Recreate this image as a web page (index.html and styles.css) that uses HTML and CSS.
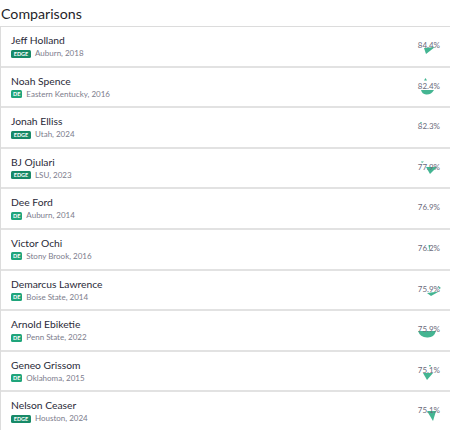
FILE: index.html
```html
<!DOCTYPE html>
<html>
<head>
<meta charset="utf-8">
<link rel="stylesheet" href="styles.css">
</head>
<body>
<h2 class="title">Comparisons</h2>
<div class="list">
  <div class="row">
    <div class="info"><div class="name">Jeff Holland</div><div class="meta"><span class="badge edge">EDGE</span><span class="school">Auburn, 2018</span></div></div>
    <div class="pct">84.4%</div>
    <svg class="radar" viewBox="0 0 40 40"><polygon points="14,21 25,20 16,27"/></svg>
  </div>
  <div class="row">
    <div class="info"><div class="name">Noah Spence</div><div class="meta"><span class="badge de">DE</span><span class="school">Eastern Kentucky, 2016</span></div></div>
    <div class="pct">82.4%</div>
    <svg class="radar" viewBox="0 0 40 40"><polygon points="14,12.5 17,12.5 15.5,10"/><path d="M11 22 L24 22 Q21 27 16 26.5 Q12 26 11 22 Z"/></svg>
  </div>
  <div class="row">
    <div class="info"><div class="name">Jonah Elliss</div><div class="meta"><span class="badge edge">EDGE</span><span class="school">Utah, 2024</span></div></div>
    <div class="pct">82.3%</div>
    <svg class="radar" viewBox="0 0 40 40"><polygon points="10,14 12,14 11,15.5"/></svg>
  </div>
  <div class="row">
    <div class="info"><div class="name">BJ Ojulari</div><div class="meta"><span class="badge edge">EDGE</span><span class="school">LSU, 2023</span></div></div>
    <div class="pct">77.9%</div>
    <svg class="radar" viewBox="0 0 40 40"><polygon points="11,12.5 14,12.5 12,14"/><polygon points="16,18 27,18 20,25"/></svg>
  </div>
  <div class="row">
    <div class="info"><div class="name">Dee Ford</div><div class="meta"><span class="badge de">DE</span><span class="school">Auburn, 2014</span></div></div>
    <div class="pct">76.9%</div>
  </div>
  <div class="row">
    <div class="info"><div class="name">Victor Ochi</div><div class="meta"><span class="badge de">DE</span><span class="school">Stony Brook, 2016</span></div></div>
    <div class="pct">76.2%</div>
    <svg class="radar" viewBox="0 0 40 40"><polygon points="18.5,15 20,15 19.5,22"/></svg>
  </div>
  <div class="row">
    <div class="info"><div class="name">Demarcus Lawrence</div><div class="meta"><span class="badge de">DE</span><span class="school">Boise State, 2014</span></div></div>
    <div class="pct">75.9%</div>
    <svg class="radar" viewBox="0 0 40 40"><polygon points="17,22 29,20.5 21,25"/><polygon points="28,15 31,17 29,18"/></svg>
  </div>
  <div class="row">
    <div class="info"><div class="name">Arnold Ebiketie</div><div class="meta"><span class="badge de">DE</span><span class="school">Penn State, 2022</span></div></div>
    <div class="pct">75.9%</div>
    <svg class="radar" viewBox="0 0 40 40"><path d="M8 20 L26 20 Q24 27 17 26.5 Q10 26 8 20 Z"/></svg>
  </div>
  <div class="row">
    <div class="info"><div class="name">Geneo Grissom</div><div class="meta"><span class="badge de">DE</span><span class="school">Oklahoma, 2015</span></div></div>
    <div class="pct">75.1%</div>
    <svg class="radar" viewBox="0 0 40 40"><polygon points="19,13 21,13 20,15"/><polygon points="13,21 23,21 17,28"/></svg>
  </div>
  <div class="row">
    <div class="info"><div class="name">Nelson Ceaser</div><div class="meta"><span class="badge edge">EDGE</span><span class="school">Houston, 2024</span></div></div>
    <div class="pct">75.1%</div>
    <svg class="radar" viewBox="0 0 40 40"><polygon points="17,19 26,19 23,29"/></svg>
  </div>
</div>
</body>
</html>
```

FILE: styles.css
```css
html, body {
  margin: 0;
  padding: 0;
  background: #fff;
}
body {
  font-family: Lato, "Noto Sans", sans-serif;
  color: #2d2d3a;
  overflow: hidden;
}
.title {
  margin: 0;
  padding: 4px 0 0 1px;
  height: 22px;
  font-size: 14.2px;
  font-weight: 400;
  line-height: 20px;
  color: #1f1f2a;
}
.list {
  border-left: 1px solid #dcdcdc;
  border-top: 1px solid #dcdcdc;
}
.row {
  position: relative;
  display: flex;
  justify-content: space-between;
  align-items: flex-start;
  height: 38.6px;
  border-bottom: 2px solid #e2e2e2;
  padding: 0 10px 0 10px;
  box-sizing: content-box;
}
.info {
  display: flex;
  flex-direction: column;
  padding-top: 7px;
}
.name {
  font-size: 10.3px;
  line-height: 13px;
  color: #2a2a38;
}
.meta {
  display: flex;
  align-items: center;
  gap: 4px;
  margin-top: 1px;
  height: 11px;
}
.badge {
  display: inline-flex;
  align-items: center;
  justify-content: center;
  height: 8px;
  padding: 0 2px;
  border-radius: 1.5px;
  font-size: 5.5px;
  font-weight: 700;
  line-height: 8px;
  color: #fff;
  letter-spacing: 0;
}
.badge.edge {
  background: #188a68;
  min-width: 16px;
}
.badge.de {
  background: #1fa57b;
  min-width: 7px;
}
.school {
  font-size: 8px;
  line-height: 11px;
  color: #7c7c8c;
}
.pct {
  position: relative;
  z-index: 1;
  font-size: 8px;
  line-height: 10px;
  padding-top: 13px;
  color: #6b6b7c;
}
.radar {
  position: absolute;
  top: 0;
  right: 0;
  width: 40px;
  height: 40px;
  fill: #3ab28d;
  opacity: 0.95;
}
```
